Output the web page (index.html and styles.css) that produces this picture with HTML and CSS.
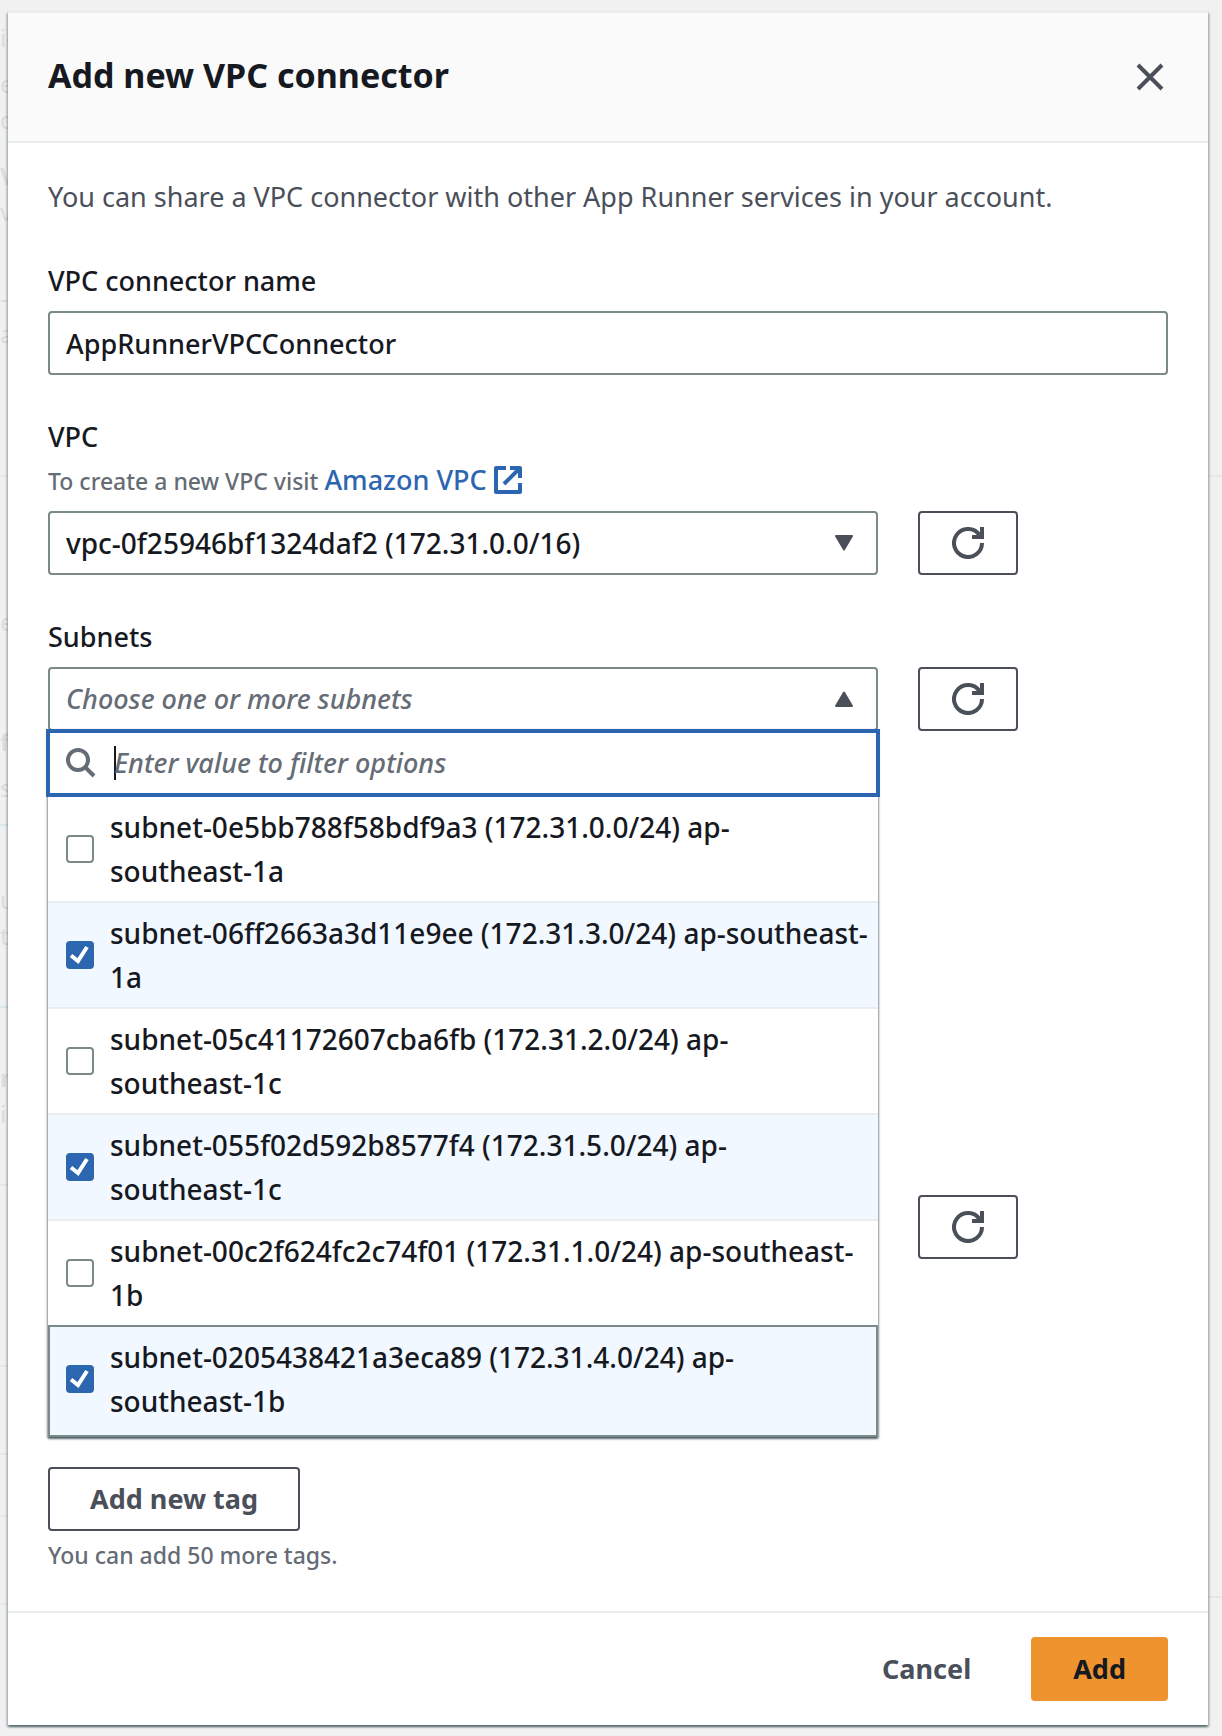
FILE: index.html
```html
<!DOCTYPE html>
<html lang="en">
<head>
<meta charset="utf-8">
<meta name="viewport" content="width=device-width, initial-scale=1">
<title>Add new VPC connector</title>
<link rel="stylesheet" href="styles.css">
</head>
<body>
<svg class="sprite" aria-hidden="true">
  <symbol id="refresh" viewBox="0 0 32 32">
    <path d="M30 16A14 14 0 1 1 27.500 8" fill="none" stroke="currentColor" stroke-width="4"/>
    <path d="M30 0v10H20" fill="none" stroke="currentColor" stroke-width="4"/>
  </symbol>
</svg>
<!-- Edge of the dimmed page behind the dialog -->
<aside class="behind" aria-hidden="true">
  <div class="block first"><p>ic</p><p class="gap-s">e</p><p>d</p><p class="gap-m"><b>V</b></p><p>v</p><p class="gap-l">-</p><p>a</p></div>
  <div class="block second"><p>e</p><p class="gap-xl"><b>f</b></p><p class="gap-s">s</p></div>
  <div class="block third"><p>u</p><p>t.</p></div>
  <div class="block fourth"><p><b>n</b></p><p>i</p></div>
  <div class="block"></div>
  <div class="block short"></div>
  <div class="block shorter"></div>
  <div class="block short"></div>
</aside>
<main class="dialog" role="dialog" aria-labelledby="dialog-title">
  <header class="dialog-header">
    <h1 class="dialog-title" id="dialog-title">Add new VPC connector</h1>
    <button class="close" type="button" aria-label="Close">
      <svg viewBox="0 0 28 28" width="28" height="28"><path d="M2 2l24 24M26 2L2 26" fill="none" stroke="currentColor" stroke-width="4"/></svg>
    </button>
  </header>
  <form class="dialog-body">
    <p class="intro">You can share a VPC connector with other App Runner services in your account.</p>
    <div class="field">
      <label class="label" for="name">VPC connector name</label>
      <input class="control" id="name" type="text" value="AppRunnerVPCConnector">
    </div>
    <div class="field">
      <label class="label with-hint" for="vpc">VPC</label>
      <p class="hint vpc-hint">To create a new VPC visit <a class="link" href="#vpc">Amazon VPC <svg class="external" viewBox="0 0 28 28" width="28" height="28"><path d="M12 2H2v24h24V17M16 2h10v10M26 2L10 18" fill="none" stroke="currentColor" stroke-width="4" stroke-linejoin="round"/></svg></a></p>
      <div class="row">
        <div class="select-wrap">
          <select class="control large" id="vpc"><option>vpc-0f25946bf1324daf2 (172.31.0.0/16)</option></select>
          <svg class="caret" viewBox="0 0 20 16" width="20" height="16"><path d="M2 1h16L10 14.500z" fill="currentColor" stroke="currentColor" stroke-width="2" stroke-linejoin="round"/></svg>
        </div>
        <button class="button refresh" type="button" aria-label="Refresh VPCs"><svg width="32" height="32"><use href="#refresh"/></svg></button>
      </div>
    </div>
    <div class="field">
      <label class="label" for="subnets">Subnets</label>
      <div class="row">
        <div class="select-wrap">
          <button class="control trigger" id="subnets" type="button" aria-expanded="true">Choose one or more subnets</button>
          <svg class="caret" viewBox="0 0 20 16" width="20" height="16"><path d="M2 15h16L10 1.500z" fill="currentColor" stroke="currentColor" stroke-width="2" stroke-linejoin="round"/></svg>
          <div class="menu">
            <div class="filter">
              <svg viewBox="0 0 30 30" width="30" height="30"><circle cx="12" cy="12" r="10" fill="none" stroke="currentColor" stroke-width="4"/><path d="M19 19l9 9" stroke="currentColor" stroke-width="4"/></svg>
              <input class="filter-input" type="text" aria-label="Filter subnets" placeholder="Enter value to filter options">
            </div>
            <label class="option"><input class="check" type="checkbox"><span>subnet-0e5bb788f58bdf9a3 (172.31.0.0/24) ap-<br>southeast-1a</span></label>
            <label class="option selected"><input class="check" type="checkbox" checked><span>subnet-06ff2663a3d11e9ee (172.31.3.0/24) ap-southeast-<br>1a</span></label>
            <label class="option"><input class="check" type="checkbox"><span>subnet-05c41172607cba6fb (172.31.2.0/24) ap-<br>southeast-1c</span></label>
            <label class="option selected"><input class="check" type="checkbox" checked><span>subnet-055f02d592b8577f4 (172.31.5.0/24) ap-<br>southeast-1c</span></label>
            <label class="option"><input class="check" type="checkbox"><span>subnet-00c2f624fc2c74f01 (172.31.1.0/24) ap-southeast-<br>1b</span></label>
            <label class="option selected active"><input class="check" type="checkbox" checked><span>subnet-0205438421a3eca89 (172.31.4.0/24) ap-<br>southeast-1b</span></label>
          </div>
        </div>
        <button class="button refresh" type="button" aria-label="Refresh subnets"><svg width="32" height="32"><use href="#refresh"/></svg></button>
      </div>
    </div>
    <div class="row groups">
      <button class="button refresh" type="button" aria-label="Refresh security groups"><svg width="32" height="32"><use href="#refresh"/></svg></button>
    </div>
    <div class="tags">
      <button class="button" type="button">Add new tag</button>
      <p class="hint">You can add 50 more tags.</p>
    </div>
  </form>
  <footer class="dialog-footer">
    <button class="button plain" type="button">Cancel</button>
    <button class="button primary" type="button">Add</button>
  </footer>
</main>
<div class="behind" aria-hidden="true">
  <div class="block upper"></div>
  <div class="block lower"></div>
</div>
</body>
</html>
```
FILE: styles.css
```css
* { box-sizing: border-box; }
body {
  display: grid;
  grid-template-columns: 8px minmax(0, 1fr) 14px;
  margin: 0;
  background: #f1f1f1;
  color: #16191f;
  font: 500 27px/44px "Noto Sans", "Open Sans", sans-serif;
}
.sprite { display: none; }
svg { display: block; flex: none; }
h1, p { margin: 0; }
input, select, button { font: inherit; color: inherit; }

.behind {
  overflow: hidden;
  color: #dcdddd;
  font-size: 24px;
  font-weight: 400;
  line-height: 36px;
  white-space: nowrap;
  user-select: none;
}
.block { min-height: 181px; border-bottom: 2px solid #e6e8e8; }
.first { padding: 20px 0 123px; }
.second { padding: 127px 0 18px; border-color: #dde8ee; }
.third { padding: 56px 0 52px; border-color: #dde8ee; }
.fourth { min-height: 178px; padding: 52px 0; }
.short { min-height: 88px; }
.shorter { min-height: 62px; }
.upper { min-height: 477px; }
.lower { min-height: 1121px; }
.gap-s { margin-top: 10px; }
.gap-m { margin-top: 20px; }
.gap-l { margin-top: 50px; }
.gap-xl { margin-top: 84px; }

.dialog {
  position: relative;
  align-self: start;
  margin: 11px 0 10px;
  background: #fff;
  border-top: 2px solid #eaeded;
  box-shadow: 0 2px 2px rgba(0, 28, 36, .5), 2px 2px 2px rgba(0, 28, 36, .15), -2px 2px 2px rgba(0, 28, 36, .15);
}
.dialog-header {
  display: flex;
  align-items: center;
  justify-content: space-between;
  height: 130px;
  padding: 0 40px;
  background: #fafafa;
  border-bottom: 2px solid #eaeded;
}
.dialog-title { padding-bottom: 4px; font-size: 34px; font-weight: 700; }
.close { padding: 4px; border: 0; background: none; color: #4a4f5a; }
.dialog-body { padding: 32px 40px 34px; }
.intro { color: #4a4f5a; margin-bottom: 40px; font-weight: 400; }
.field { margin-bottom: 40px; }
.label { display: block; margin-bottom: 8px; }
.with-hint { margin-bottom: 0; }
.control {
  display: block;
  width: 100%;
  height: 64px;
  padding: 0 16px;
  border: 2px solid #7c8989;
  border-radius: 4px;
  background: #fff;
  text-align: left;
  appearance: none;
}
.large { font-size: 28px; }
.hint { color: #656c75; font-size: 23px; }
.vpc-hint { height: 44px; margin-bottom: 8px; }
.link { color: #2c66b1; font-size: 27px; line-height: 32px; text-decoration: none; }
.external { display: inline-block; vertical-align: -4px; }
.row { display: grid; grid-template-columns: repeat(12, minmax(0, 1fr)); gap: 40px; }
.select-wrap { position: relative; grid-column: span 9; }
.caret { position: absolute; right: 24px; top: 24px; color: #4a4f5a; }
.trigger, .filter-input::placeholder { color: #656c75; font-style: italic; opacity: 1; }
.button {
  height: 64px;
  padding: 0 40px;
  border: 2px solid #4a4f5a;
  border-radius: 4px;
  background: #fff;
  color: #4a4f5a;
  font-weight: 700;
}
.refresh { grid-column: span 3; width: 100px; padding: 0 32px; }

.menu {
  position: absolute;
  z-index: 1;
  top: 62px;
  left: 0;
  right: 0;
  background: #fff;
  box-shadow: 0 2px 2px rgba(0, 28, 36, .5), 1px 1px 2px rgba(0, 28, 36, .3), -1px 1px 2px rgba(0, 28, 36, .3);
}
.filter {
  display: flex;
  align-items: center;
  gap: 18px;
  height: 68px;
  margin: 0 -2px;
  padding: 0 16px;
  border: 4px solid #2c66b1;
  background: #fff;
  color: #656c75;
}
/* The gradient is the text cursor of the focused filter */
.filter-input {
  flex: 1;
  min-width: 0;
  padding: 0;
  border: 0;
  outline: 0;
  background: linear-gradient(#16191f, #16191f) left center / 2px 34px no-repeat;
}
.option {
  display: flex;
  align-items: center;
  gap: 16px;
  padding: 8px 18px;
  border-bottom: 2px solid #eaeded;
  font-size: 28px;
  white-space: nowrap;
}
.selected { background: #f1f8ff; }
.active { margin-top: -2px; padding: 8px 16px 12px; border: 2px solid #7c8989; }
.check {
  flex: none;
  width: 28px;
  height: 28px;
  margin: 0;
  border: 2px solid #7c8989;
  border-radius: 4px;
  background: #fff;
  appearance: none;
}
.check:checked {
  border-color: #2c66b1;
  background: #2c66b1 url("data:image/svg+xml,%3Csvg xmlns='http://www.w3.org/2000/svg' viewBox='0 0 28 28'%3E%3Cpath d='M5 14.500l7 5.500L21 6' fill='none' stroke='white' stroke-width='4'/%3E%3C/svg%3E") center / 28px 28px no-repeat;
}
.groups { margin-top: 464px; }
.groups .refresh { grid-column: 10 / span 3; }
.tags { display: grid; justify-items: start; gap: 2px; margin-top: 208px; }
.dialog-footer {
  display: flex;
  justify-content: flex-end;
  gap: 18px;
  padding: 24px 40px;
  border-top: 2px solid #eaeded;
}
.plain { border-color: transparent; }
.primary { border-color: #ee932e; background: #ee932e; color: #16191f; }
```
